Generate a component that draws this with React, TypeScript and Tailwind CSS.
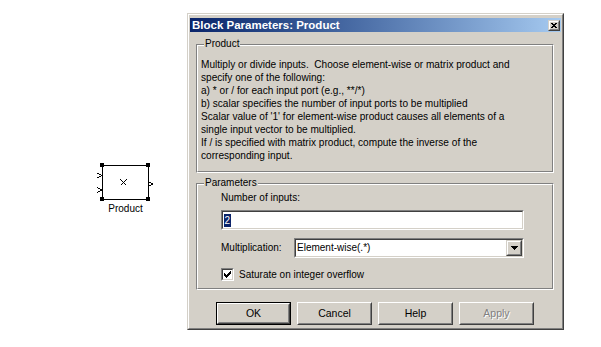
import type { ReactNode } from 'react'

const lines = [
  'Multiply or divide inputs.  Choose element-wise or matrix product and',
  'specify one of the following:',
  'a) * or / for each input port (e.g., **/*)',
  'b) scalar specifies the number of input ports to be multiplied',
  "Scalar value of '1' for element-wise product causes all elements of a",
  'single input vector to be multiplied.',
  'If / is specified with matrix product, compute the inverse of the',
  'corresponding input.',
]

// classic 7x7 check glyph, as pixel runs [x, y, w]
const checkRuns = [
  [6, 0, 1], [5, 1, 2], [0, 2, 1], [4, 2, 3], [0, 3, 2], [3, 3, 3], [0, 4, 5], [1, 5, 3], [2, 6, 1],
]
const closeRuns = [
  [0, 0, 2], [4, 0, 2], [1, 1, 4], [2, 2, 2], [1, 3, 4], [0, 4, 2], [4, 4, 2],
]
const arrowRuns = [
  [0, 0, 7], [1, 1, 5], [2, 2, 3], [3, 3, 1],
]

function Pixels({ runs, w, h, className }: { runs: number[][]; w: number; h: number; className?: string }) {
  return (
    <svg width={w} height={h} viewBox={`0 0 ${w} ${h}`} shapeRendering="crispEdges" className={className}>
      {runs.map(([x, y, rw], i) => (
        <rect key={i} x={x} y={y} width={rw} height={1} fill="#000" />
      ))}
    </svg>
  )
}

function ProductBlock() {
  return (
    <>
      <svg
        width={60}
        height={45}
        viewBox="0 0 60 45"
        shapeRendering="crispEdges"
        className="absolute left-[95px] top-[160px]"
      >
        <rect x={7.5} y={5.5} width={46} height={34} fill="#fff" stroke="#000" />
        <rect x={5} y={3} width={4} height={4} fill="#000" />
        <rect x={51} y={3} width={4} height={4} fill="#000" />
        <rect x={5} y={37} width={4} height={4} fill="#000" />
        <rect x={51} y={37} width={4} height={4} fill="#000" />
        <polyline points="2.5,13 6.5,15.5 2.5,18" fill="none" stroke="#000" />
        <polyline points="2.5,27.5 6.5,30 2.5,32.5" fill="none" stroke="#000" />
        <polyline points="54.5,22 57.5,24 54.5,26" fill="none" stroke="#000" />
        <line x1={25.5} y1={19.5} x2={31.5} y2={25.5} stroke="#000" />
        <line x1={31.5} y1={19.5} x2={25.5} y2={25.5} stroke="#000" />
      </svg>
      <div className="absolute left-[102px] top-[203px] w-[47px] text-center text-[10px] leading-[12px]">
        Product
      </div>
    </>
  )
}

function GroupBox({ label, className, children }: { label: string; className: string; children: ReactNode }) {
  return (
    <div className={`relative border border-t-[#808080] border-l-[#808080] border-b-white border-r-white ${className}`}>
      <div className="h-full border border-t-white border-l-white border-b-[#808080] border-r-[#808080]">
        {children}
      </div>
      <span className="absolute left-[7px] top-[-7px] bg-[#d4d0c8] px-[1px] leading-[12px]">{label}</span>
    </div>
  )
}

function Sunken({ className, children }: { className: string; children: ReactNode }) {
  return (
    <div className={`border border-t-[#808080] border-l-[#808080] border-b-white border-r-white ${className}`}>
      <div className="h-full border border-t-[#404040] border-l-[#404040] border-b-[#d4d0c8] border-r-[#d4d0c8] bg-white flex items-center">
        {children}
      </div>
    </div>
  )
}

function Button({ label, isDefault, disabled }: { label: string; isDefault?: boolean; disabled?: boolean }) {
  if (isDefault) {
    return (
      <div className="w-[75px] h-[23px] border border-black">
        <div className="h-full border border-t-white border-l-white border-b-[#404040] border-r-[#404040]">
          <div className="h-full border border-t-[#d4d0c8] border-l-[#d4d0c8] border-b-[#808080] border-r-[#808080] flex items-center justify-center text-[10.5px]">
            {label}
          </div>
        </div>
      </div>
    )
  }
  return (
    <div className="w-[75px] h-[23px] border border-t-white border-l-white border-b-[#404040] border-r-[#404040]">
      <div
        className={`h-full border border-t-[#d4d0c8] border-l-[#d4d0c8] border-b-[#808080] border-r-[#808080] flex items-center justify-center text-[10.5px] ${
          disabled ? 'text-[#808080] [text-shadow:1px_1px_0_#fff]' : ''
        }`}
      >
        {label}
      </div>
    </div>
  )
}

function Dialog() {
  return (
    <div className="mt-[13px] w-[377px] h-[317px] bg-[#d4d0c8] border border-t-[#d4d0c8] border-l-[#d4d0c8] border-b-[#404040] border-r-[#404040]">
      <div className="h-full border border-t-white border-l-white border-b-[#808080] border-r-[#808080] pl-[1px] pr-[1px] pt-[3px]">
        {/* title bar */}
        <div className="h-[14px] flex items-center justify-between bg-linear-to-r from-[#0a246a] to-[#a6caf0]">
          <span className="pl-[2px] text-white font-bold text-[11.5px] leading-[14px]">Block Parameters: Product</span>
          <div className="mr-[1px] w-[12px] h-[11px] border border-t-[#d4d0c8] border-l-[#d4d0c8] border-b-[#404040] border-r-[#404040]">
            <div className="h-full bg-[#d4d0c8] border border-t-white border-l-white border-b-[#808080] border-r-[#808080] flex items-center justify-center">
              <Pixels runs={closeRuns} w={6} h={5} />
            </div>
          </div>
        </div>

        <div className="pl-[6px] pr-[7px] pt-[12px]">
          <GroupBox label="Product" className="h-[129px]">
            <div className="pt-[12px] pl-[3px] text-[10.1px] leading-[13px] whitespace-pre">
              {lines.map((l) => (
                <div key={l}>{l}</div>
              ))}
            </div>
          </GroupBox>

          <GroupBox label="Parameters" className="mt-[10px] h-[107px]">
            <div className="pl-[23px] pt-[7px] leading-[12px]">
              <div>Number of inputs:</div>
              <Sunken className="mt-[6px] w-[303px] h-[20px]">
                <span className="ml-[1px] bg-[#0a246a] text-white leading-[13px] px-[0.5px]">2</span>
              </Sunken>
              <div className="mt-[8px] flex items-center">
                <div className="w-[73px]">Multiplication:</div>
                <Sunken className="w-[230px] h-[20px]">
                  <span className="flex-1 pl-[1px]">Element-wise(.*)</span>
                  <div className="w-[16px] h-[16px] border border-t-[#d4d0c8] border-l-[#d4d0c8] border-b-[#404040] border-r-[#404040]">
                    <div className="h-full bg-[#d4d0c8] border border-t-white border-l-white border-b-[#808080] border-r-[#808080] flex items-center justify-center">
                      <Pixels runs={arrowRuns} w={7} h={4} />
                    </div>
                  </div>
                </Sunken>
              </div>
              <div className="mt-[10px] flex items-center gap-[5px]">
                <Sunken className="w-[13px] h-[13px]">
                  <Pixels runs={checkRuns} w={7} h={7} className="ml-[1px]" />
                </Sunken>
                <span>Saturate on integer overflow</span>
              </div>
            </div>
          </GroupBox>

          <div className="mt-[12px] pl-[20px] flex gap-[6px]">
            <Button label="OK" isDefault />
            <Button label="Cancel" />
            <Button label="Help" />
            <Button label="Apply" disabled />
          </div>
        </div>
      </div>
    </div>
  )
}

export default function App() {
  return (
    <div className="w-[601px] h-[347px] bg-white flex font-['Liberation_Sans',Arial,sans-serif] text-[10px] text-black">
      <div className="relative w-[187px] h-full shrink-0">
        <ProductBlock />
      </div>
      <Dialog />
    </div>
  )
}
